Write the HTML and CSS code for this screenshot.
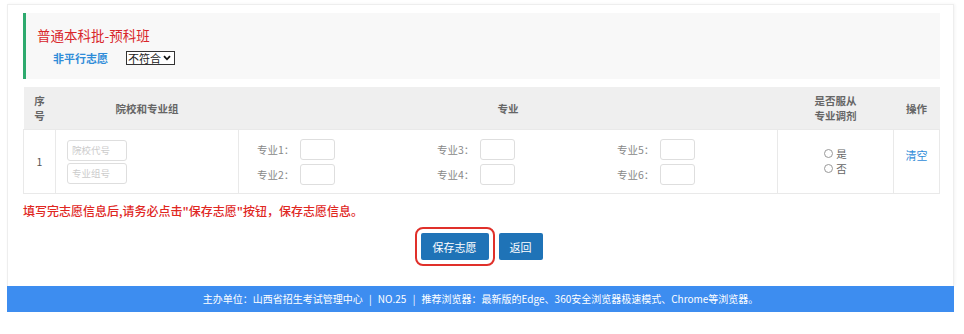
FILE: index.html
```html
<!DOCTYPE html>
<html>
<head>
	<meta charset="utf-8">
	<title>志愿填报</title>
	<link rel="stylesheet" href="styles.css">
</head>
<body>
	<div class="main">
		<div class="batch">
			<div class="batch-title">普通本科批-预科班</div>
			<div class="batch-sub">
				<span class="batch-type">非平行志愿</span>
				<span class="select-box">
					<select name="fit">
						<option>不符合</option>
						<option>符合</option>
					</select>
					<svg width="8" height="6" viewBox="0 0 8 6"><path d="M1 1.2 L4 4.3 L7 1.2" fill="none" stroke="#111" stroke-width="1.8"/></svg>
				</span>
			</div>
		</div>

		<table class="wish">
			<thead>
				<tr>
					<th class="c-no">序<br>号</th>
					<th class="c-school">院校和专业组</th>
					<th class="c-major">专业</th>
					<th class="c-adjust">是否服从<br>专业调剂</th>
					<th class="c-op">操作</th>
				</tr>
			</thead>
			<tbody>
				<tr>
					<td class="no">1</td>
					<td class="school">
						<div class="school-box">
							<input type="text" placeholder="院校代号">
							<input type="text" placeholder="专业组号">
						</div>
					</td>
					<td class="major">
						<div class="majors">
							<div class="major-item"><label>专业1：</label><input type="text"></div>
							<div class="major-item"><label>专业2：</label><input type="text"></div>
							<div class="major-item"><label>专业3：</label><input type="text"></div>
							<div class="major-item"><label>专业4：</label><input type="text"></div>
							<div class="major-item"><label>专业5：</label><input type="text"></div>
							<div class="major-item"><label>专业6：</label><input type="text"></div>
						</div>
					</td>
					<td class="adjust">
						<div class="adjust-box">
							<label><input type="radio" name="adjust_1" value="1">是</label>
							<label><input type="radio" name="adjust_1" value="0">否</label>
						</div>
					</td>
					<td class="op">
						<div class="op-box"><a href="#" class="clear">清空</a></div>
					</td>
				</tr>
			</tbody>
		</table>

		<p class="notice">填写完志愿信息后,请务必点击"保存志愿"按钮，保存志愿信息。</p>

		<div class="actions">
			<button class="btn btn-save">保存志愿</button>
			<button class="btn">返回</button>
		</div>
	</div>
	<div class="footer">主办单位：山西省招生考试管理中心 <span class="sep">|</span> NO.25 <span class="sep">|</span> 推荐浏览器：最新版的Edge、360安全浏览器极速模式、Chrome等浏览器。</div>
</body>
</html>
```

FILE: styles.css
```css
body {
	margin: 0;
	font-family: "Noto Sans CJK SC", "Microsoft YaHei", sans-serif;
	color: #333;
	background: #fff;
}
.main {
	margin: 4px 10px 0 7px;
	padding: 8px 13px 26px 15px;
	border: 1px solid #eee;
	border-bottom: 0;
	box-shadow: 1px 0 3px rgba(0, 0, 0, 0.05);
}

/* batch header */
.batch {
	background: #f8f8f8;
	border-left: 3px solid #2eaa6e;
	padding: 12px 11px 11px;
}
.batch-title {
	color: #d9262b;
	font-size: 13.5px;
	line-height: 20px;
}
.batch-sub {
	margin-top: 3px;
	padding-left: 16px;
	height: 20px;
	display: flex;
	align-items: center;
}
.batch-type {
	color: #2f8cd8;
	font-size: 11px;
	font-weight: bold;
}
.select-box {
	margin-left: 18px;
	height: 12px;
	padding: 0 3px 0 1px;
	display: inline-flex;
	align-items: center;
	gap: 2px;
	border: 1px solid #333;
	background: #fff;
}
.select-box select {
	appearance: none;
	border: 0;
	margin: 0;
	padding: 0;
	font-family: inherit;
	font-size: 11px;
	line-height: 12px;
	color: #222;
	background: transparent;
	outline: none;
}

/* table */
.wish {
	width: 100%;
	margin-top: 8px;
	border-collapse: collapse;
	table-layout: fixed;
	font-size: 10.5px;
}
.wish th {
	height: 42px;
	padding: 0;
	background: #efefef;
	color: #666;
	font-weight: bold;
	line-height: 15px;
}
.wish td {
	height: 63px;
	padding: 0;
	border: 1px solid #e9e9e9;
}
.c-no { width: 32px; }
.c-school { width: 183px; }
.c-adjust { width: 116px; }
.c-op { width: 46px; }
.no {
	text-align: center;
	color: #555;
}
.school-box {
	padding-left: 11px;
	display: flex;
	flex-direction: column;
	gap: 2px;
}
.school-box input,
.major-item input {
	box-sizing: border-box;
	height: 21px;
	margin: 0;
	padding: 0 4px;
	border: 1px solid #dedede;
	border-radius: 3px;
	font-family: inherit;
	font-size: 9.5px;
}
.school-box input {
	width: 60px;
}
::placeholder {
	color: #ccc;
}
.majors {
	padding-left: 18px;
	display: grid;
	grid-template-columns: repeat(3, 180px);
	grid-template-rows: repeat(2, 21px);
	grid-auto-flow: column;
	row-gap: 4px;
}
.major-item {
	display: flex;
	align-items: center;
}
.major-item label {
	width: 43px;
	color: #888;
}
.major-item input {
	width: 35px;
}
.wish td.adjust,
.wish td.op {
	vertical-align: top;
	text-align: center;
}
.adjust-box {
	margin-top: 16px;
	display: inline-flex;
	flex-direction: column;
}
.adjust-box label {
	display: flex;
	align-items: center;
	gap: 3px;
	line-height: 15px;
	font-size: 10.5px;
	color: #666;
}
.adjust-box input {
	appearance: none;
	width: 9px;
	height: 9px;
	margin: 0;
	border: 1px solid #999;
	border-radius: 50%;
	background: #fff;
}
.op-box {
	margin-top: 18px;
	line-height: 14px;
}
.clear {
	color: #2f8cd8;
	font-size: 11px;
	text-decoration: none;
}

/* bottom */
.notice {
	margin: 9px 0 0;
	color: #e0271f;
	font-size: 12px;
	font-weight: 500;
	line-height: 16px;
}
.actions {
	margin-top: 14px;
	display: flex;
	justify-content: center;
	gap: 10px;
}
.btn {
	height: 27px;
	padding: 0 11px;
	border: 0;
	border-radius: 2px;
	background: #1f73b7;
	color: #fff;
	font-family: inherit;
	font-size: 11px;
}
.btn-save {
	width: 68px;
	outline: 2px solid #e0302a;
	outline-offset: 4px;
}
.footer {
	margin: 0 10px 0 7px;
	height: 26px;
	line-height: 26px;
	background: #3d8df0;
	color: #fff;
	font-size: 10px;
	text-align: center;
}
.sep {
	margin: 0 4px;
}
```
